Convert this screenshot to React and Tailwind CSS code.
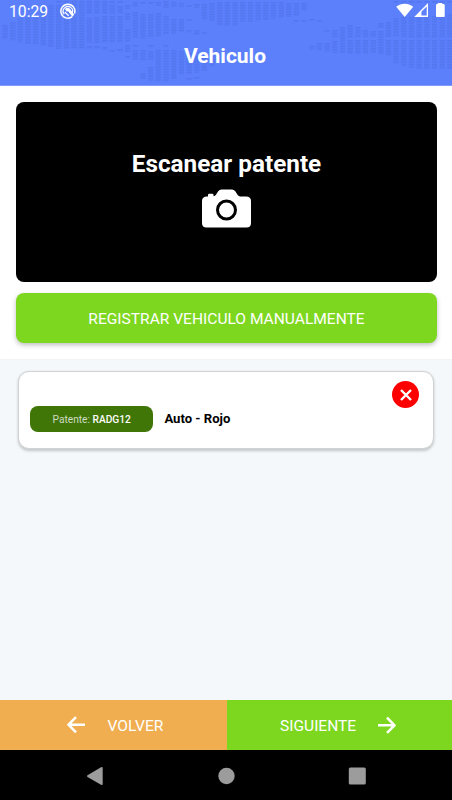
import React from "react";

// Vertical runs of dashes in the header texture, one list per column: [top, bottom].
const COLUMNS = [
  [[25, 38]], [[22, 40]], [[18, 42]], [[18, 43]], [[18, 44]], [[8, 45]], [[5, 46]],
  [[1, 2], [5, 48]], [[1, 2], [4, 48]], [[1, 48]], [[1, 48]],
  [[1, 13], [18, 42], [46, 48]], [[1, 13], [17, 42], [46, 48]], [[1, 13], [16, 42], [47, 49]],
  [[1, 3], [5, 13], [16, 42], [50, 51]], [[1, 2], [6, 13], [16, 41], [49, 51]],
  [[5, 8], [13, 20], [29, 41], [45, 51], [56, 57]],
  [[2, 6], [12, 37], [45, 46], [50, 59]], [[2, 3], [14, 38], [50, 60], [73, 78]],
  [[2, 3], [14, 36], [45, 46], [51, 59], [67, 80]], [[2, 5], [13, 36], [50, 81]],
  [[1, 7], [16, 34], [45, 46], [50, 81]], [[2, 6], [19, 33], [50, 78]],
  [[3, 6], [19, 31], [51, 74]], [[5, 6], [19, 20], [30, 32], [53, 73], [78, 79]],
  [[4, 7], [30, 34], [56, 72], [77, 78]], [[4, 19], [32, 33], [58, 70]],
  [[3, 20], [56, 66]], [[2, 24]], [[2, 25]], [[2, 25]], [[2, 21]], [[2, 21]], [[2, 20]],
  [[2, 19]], [[2, 18]], [[2, 17]], [[3, 16]], [[3, 15], [20, 21]], [[3, 10], [20, 21]],
  [[19, 20], [46, 49]], [[20, 21], [43, 50]], [[30, 31], [43, 51]], [[30, 37], [41, 52]],
  [[27, 52]], [[25, 37], [40, 53]], [[27, 37], [40, 53]], [[30, 37], [40, 53]],
  [[31, 36], [40, 52]], [[23, 27], [31, 53]], [[22, 36], [40, 55]],
  [[1, 2], [18, 36], [40, 63]], [[1, 2], [17, 36], [40, 65]], [[1, 2], [17, 37], [40, 67]],
  [[1, 2], [16, 37], [40, 68]], [[1, 2], [16, 37], [40, 68]], [[1, 2], [16, 37], [40, 68]],
  [[1, 2], [14, 37], [40, 68]], [[1, 2], [14, 37], [40, 68]],
];

function HeaderTexture() {
  return (
    <svg className="absolute inset-0" width="452" height="85" viewBox="0 0 452 85" fill="none">
      {COLUMNS.map((runs, i) =>
        runs.map(([a, b], k) => (
          <g key={i + "-" + k} stroke="#4f72e6" strokeWidth="5.2">
            <path d={`M${5 + 7.67 * i} ${a}V${b + 0.8}`} strokeOpacity="0.22" />
            <path d={`M${5 + 7.67 * i} ${a}V${b + 0.8}`} strokeOpacity="0.45" strokeDasharray="1.5 1.17" />
          </g>
        ))
      )}
    </svg>
  );
}

function Arrow({ className }) {
  return (
    <svg className={className} width="18" height="18" viewBox="0 0 18 18" fill="none" stroke="white" strokeWidth="2.6">
      <path d="M18 8.7H1.8M9 1.1L1.5 8.7L9 16.3" strokeLinejoin="round" />
    </svg>
  );
}

export default function App() {
  return (
    <div className="flex h-[800px] w-[452px] flex-col overflow-hidden bg-[#f4f8fa] font-['Roboto',sans-serif]">
      <header className="relative h-[85.5px] shrink-0 border-b border-[#7f9cfc] bg-[#5c80fc] text-white">
        <HeaderTexture />
        <div className="relative flex h-[23px] items-center pl-[9px]">
          <span className="w-[51px] text-[15.7px] leading-[23px]">10:29</span>
          <svg className="-mt-[2px]" width="16" height="16" viewBox="0 0 16 16" fill="none" stroke="white">
            <path d="M12.2 13.7A7 7 0 1 1 14.5 10.5" strokeWidth="1.5" />
            <path d="M4.3 11.2A4.7 4.7 0 1 1 12.1 10.2" strokeWidth="1.2" />
            <path d="M5 6.2C6.5 4 9 4.4 10.2 6.2L14.3 11.6L12.4 13.7L8.1 8.3L6.6 8.6Z" fill="white" stroke="none" />
            <path d="M4.8 9.1L8.7 12.7" strokeWidth="1.3" />
          </svg>
          <svg className="-mt-[1px] ml-auto mr-[6px]" width="50" height="16" viewBox="0 0 50 16" fill="white">
            <path d="M.2 3.7C5.2-.3 12.2-.3 17.2 3.7L8.7 13.9Z" />
            <path fillRule="evenodd" d="M18.2 13.9L32 0V13.9ZM25.4 12.4H30.7V3.4L25.4 8.7Z" />
            <path d="M41.8 1V0H46.2V1H47.5Q48.7 1 48.7 2.2V12.9Q48.7 14.1 47.5 14.1H41.2Q40 14.1 40 12.9V2.2Q40 1 41.2 1Z" />
          </svg>
        </div>
        <h1 className="relative mt-[20px] text-center text-[21px] font-bold leading-[26px] -left-[1px]">Vehiculo</h1>
      </header>

      <section className="h-[273.5px] shrink-0 bg-white pb-[16px] pl-[16.4px] pr-[15.4px] pt-[16.4px]">
        <button className="flex h-[180.4px] w-full flex-col items-center rounded-[8px] bg-black pt-[46px] text-white">
          <span className="text-[24.3px] font-bold leading-[32px]">Escanear patente</span>
          <svg className="mt-[9px]" width="49" height="39" viewBox="0 0 49 39">
            <path fill="white" d="M5 7.5H6V6Q6 4.8 7.2 4.8H10.3Q11.5 4.8 11.5 6V7.3Q13.2 7.2 14 5.8L16.2 2.2Q17.5.4 19.5.4H30Q32 .4 33.3 2.2L35.5 5.8Q36.5 7.5 38.3 7.5H44Q49 7.5 49 12V34Q49 38.5 44.5 38.5H4.5Q0 38.5 0 34V12Q0 7.5 5 7.5Z" />
            <circle cx="24.5" cy="21" r="9" fill="none" stroke="black" strokeWidth="3" />
          </svg>
        </button>
        <button className="mt-[11px] flex h-[49.5px] w-full items-center justify-center rounded-[8px] bg-[#7ed71f] pt-[3px] text-[15.55px] text-white shadow-[0_2px_5px_rgba(0,0,0,0.26)]">
          REGISTRAR VEHICULO MANUALMENTE
        </button>
      </section>

      <main className="grow border-t border-[#f1f3f4] pl-[18px] pr-[17.6px] pt-[11.4px]">
        <article className="h-[78px] rounded-[11px] border border-[#d0d2d3] bg-white pl-[11px] pr-[14.4px] pt-[9px] shadow-[0_1.5px_3px_rgba(0,0,0,0.2)]">
          <div className="flex justify-end">
            <button className="flex size-[27px] items-center justify-center rounded-full bg-[#ff0000]">
              <svg width="12" height="12" viewBox="0 0 12 12" stroke="white" strokeWidth="2.4">
                <path d="M1 1L11 11M11 1L1 11" />
              </svg>
            </button>
          </div>
          <div className="-mt-[2px] flex items-center">
            <span className="flex h-[25.5px] w-[123.4px] items-center justify-center whitespace-pre rounded-[8px] bg-[#407607] pt-[1px] text-[10.2px] text-[#d0dbc3]">
              Patente: <b className="font-medium text-white">RADG12</b>
            </span>
            <span className="ml-[11px] text-[13.1px] font-bold text-black">Auto - Rojo</span>
          </div>
        </article>
      </main>

      <div className="flex h-[50px] shrink-0 text-[15.55px] text-white">
        <button className="flex w-[227px] items-center bg-[#f0ae50] pl-[66.5px]">
          <Arrow />
          <span className="ml-[23px] pt-[3px]">VOLVER</span>
        </button>
        <button className="flex grow items-center bg-[#7ed71f] pl-[53px]">
          <span className="pt-[3px]">SIGUIENTE</span>
          <Arrow className="ml-[22px] rotate-180" />
        </button>
      </div>
      <nav className="flex h-[50px] shrink-0 items-center bg-black pl-[86px] pt-[2px]">
        <svg width="281" height="20" viewBox="0 0 281 20" fill="#9c9c9c">
          <path d="M1.5 9.2Q.3 10 1.5 10.9L15 18.7Q16.7 19.5 16.7 17.7V2.4Q16.7.5 15 1.3Z" />
          <circle cx="140.5" cy="10" r="8.2" />
          <rect x="262.8" y="1.5" width="17" height="17" rx="1.6" />
        </svg>
      </nav>
    </div>
  );
}
